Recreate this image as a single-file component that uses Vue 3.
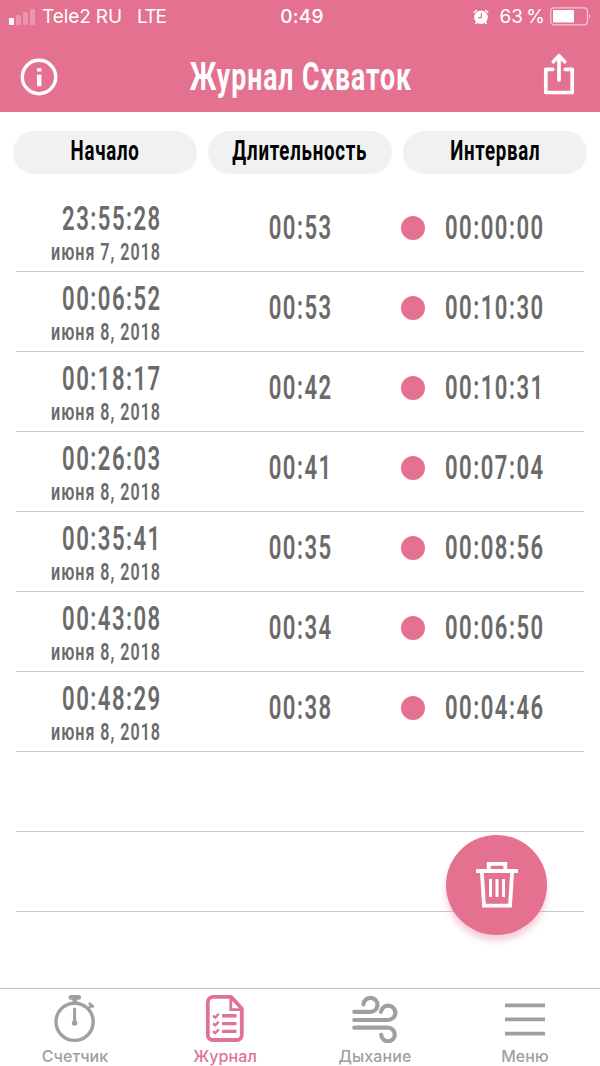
<template>
  <div class="screen">
    <header class="header">
      <div class="status">
        <div class="status-left">
          <div class="signal">
            <i v-for="n in 4" :key="n" :class="['bar', 'bar-' + n]"></i>
          </div>
          <span class="carrier">Tele2 RU</span>
          <span class="network">LTE</span>
        </div>
        <span class="clock">0:49</span>
        <div class="status-right">
          <svg class="alarm" width="16" height="16" viewBox="0 0 16 16">
            <circle cx="8" cy="8.2" r="6.8" fill="#fff" />
            <path d="M.8 3.8 3.8 1M12.2 1l3 2.8M3.8 13 2.4 15M12.2 13l1.4 2" stroke="#fff" stroke-width="1.5" />
            <path d="M8.4 4.3v4.4H5" fill="none" stroke="#e57191" stroke-width="1.2" />
          </svg>
          <span class="percent">63 %</span>
          <svg class="battery" width="42" height="19" viewBox="0 0 42 19">
            <rect x=".8" y=".8" width="36.6" height="17" rx="3" fill="none" stroke="#fff" stroke-opacity=".6" stroke-width="1.2" />
            <rect x="3" y="3" width="21" height="12.6" rx="1" fill="#fff" />
            <path d="M39 6.5q2.6 2.8 0 5.6z" fill="#fff" fill-opacity=".6" />
          </svg>
        </div>
      </div>
      <div class="nav">
        <svg width="38" height="38" viewBox="0 0 38 38">
          <circle cx="19" cy="19" r="16.7" fill="none" stroke="#fff" stroke-width="3.4" />
          <path d="M17 10.2h4.4v3.4H17zM17 16.8h4.4v11.4H17z" fill="#fff" />
        </svg>
        <h1 class="title"><span>Журнал Схваток</span></h1>
        <svg class="share" width="32" height="42" viewBox="0 0 32 42" fill="none" stroke="#fff" stroke-width="3.7">
          <path d="M9.8 16.3H2.8v23.2h26.4V16.3h-7" stroke-linejoin="round" stroke-linecap="round" />
          <path d="M16 27V3M10.3 8.7 16 2.7l5.7 6" stroke-linecap="round" stroke-linejoin="round" />
        </svg>
      </div>
    </header>

    <main class="content">
      <div class="columns">
        <div v-for="name in columns" :key="name" class="pill"><span>{{ name }}</span></div>
      </div>
      <ul class="list">
        <li v-for="(row, i) in rows" :key="i" class="row">
          <div class="start">
            <span class="time">{{ row.start }}</span>
            <span class="date">{{ row.date }}</span>
          </div>
          <div class="duration"><span class="time">{{ row.duration }}</span></div>
          <div class="interval">
            <i class="dot"></i>
            <span class="time">{{ row.interval }}</span>
          </div>
        </li>
        <li class="row"></li>
        <li class="row"></li>
      </ul>
      <button class="trash">
        <svg width="42" height="46" viewBox="0 0 42 46" fill="none" stroke="#fff">
          <path d="M0 9h42" stroke-width="3.8" />
          <path d="M12.7 9V1.9h16.6V9" stroke-width="3.8" />
          <path d="M5.8 9 8 43.6h26L36.2 9" stroke-width="3.8" />
          <path d="M14.5 17v18M21 17v18M27.5 17v18" stroke-width="3" />
        </svg>
      </button>
    </main>

    <nav class="tabs">
      <div class="tab">
        <svg width="50" height="50" viewBox="0 0 50 50" fill="none" stroke="currentColor">
          <circle cx="24.6" cy="28.8" r="18.6" stroke-width="3.4" />
          <path d="M20.8 4.4h8" stroke-width="4.6" stroke-linecap="round" />
          <path d="M24.8 4v7" stroke-width="4.6" />
          <path d="M38 16l3.8-3.8M39 10l4.6 4.2" stroke-width="2.6" />
          <path d="M24.6 16v14" stroke-width="3" stroke-linecap="round" />
          <circle cx="24.6" cy="30" r="2.8" fill="currentColor" stroke="none" />
        </svg>
        <span>Счетчик</span>
      </div>
      <div class="tab active">
        <svg width="50" height="50" viewBox="0 0 50 50" fill="none" stroke="currentColor">
          <path d="M31 3.8H13.2a5.4 5.4 0 0 0-5.4 5.4V42a5 5 0 0 0 5 5h24a5 5 0 0 0 5-5V15.5z" stroke-width="3.8" stroke-linejoin="round" />
          <path d="M30.8 4v12.6h11.2" stroke-width="2.8" />
          <path d="M22 22.8h14.5M22 30.6h14.5M22 38.4h14.5" stroke-width="3.4" />
          <path d="M13 22.6l2.3 2 3.5-3.8M13 30.4l2.3 2 3.5-3.8M13 38.2l2.3 2 3.5-3.8" stroke-width="2.4" />
        </svg>
        <span>Журнал</span>
      </div>
      <div class="tab">
        <svg width="50" height="50" viewBox="0 0 50 50" fill="none" stroke="currentColor" stroke-width="4.2" stroke-linecap="round">
          <path d="M4.3 18.8H20.3a7 7 0 1 0-6.8-7.4" />
          <path d="M4.3 27H38a7.2 7.2 0 1 0-7-8.2" />
          <path d="M4.3 34.7H38a6.8 6.8 0 1 1-6.8 7.2" />
        </svg>
        <span>Дыхание</span>
      </div>
      <div class="tab">
        <svg width="50" height="50" viewBox="0 0 50 50" stroke="currentColor" stroke-width="3.8">
          <path d="M5 12.3h40M5 26.4h40M5 40.6h40" />
        </svg>
        <span>Меню</span>
      </div>
    </nav>
  </div>
</template>

<script setup>
const columns = ['Начало', 'Длительность', 'Интервал']

const rows = [
  { start: '23:55:28', date: 'июня 7, 2018', duration: '00:53', interval: '00:00:00' },
  { start: '00:06:52', date: 'июня 8, 2018', duration: '00:53', interval: '00:10:30' },
  { start: '00:18:17', date: 'июня 8, 2018', duration: '00:42', interval: '00:10:31' },
  { start: '00:26:03', date: 'июня 8, 2018', duration: '00:41', interval: '00:07:04' },
  { start: '00:35:41', date: 'июня 8, 2018', duration: '00:35', interval: '00:08:56' },
  { start: '00:43:08', date: 'июня 8, 2018', duration: '00:34', interval: '00:06:50' },
  { start: '00:48:29', date: 'июня 8, 2018', duration: '00:38', interval: '00:04:46' },
]
</script>

<style>
body {
  margin: 0;
  background: #fff;
}
</style>

<style scoped>
.screen {
  width: 600px;
  height: 1066px;
  display: flex;
  flex-direction: column;
  overflow: hidden;
  background: #fff;
  font-family: Roboto, 'Liberation Sans', sans-serif;
}

svg {
  display: block;
  flex: none;
}

.header {
  height: 112px;
  background: #e57191;
  color: #fff;
}

.status {
  height: 33px;
  display: grid;
  grid-template-columns: 1fr auto 1fr;
  align-items: center;
  font: 400 19px/33px Inter, sans-serif;
}

.status-left,
.status-right {
  display: flex;
  align-items: center;
}

.status-left {
  padding-left: 9px;
}

.status-right {
  justify-content: flex-end;
  padding-right: 8px;
}

.signal {
  display: flex;
  align-items: flex-end;
  gap: 2px;
  width: 27px;
  height: 16px;
  margin-right: 6px;
}

.bar {
  width: 5px;
  border-radius: 1px;
  background: rgba(255, 255, 255, 0.25);
}

.bar-1 {
  height: 7px;
  background: #fff;
}

.bar-2 { height: 10px; }
.bar-3 { height: 13px; }
.bar-4 { height: 16px; }

.carrier {
  letter-spacing: -0.1px;
}

.network {
  margin-left: 15px;
  letter-spacing: -1.4px;
}

.clock {
  margin-left: 4px;
  font-weight: 500;
  letter-spacing: 0.2px;
}

.percent {
  margin: 0 5px 0 10px;
  word-spacing: -2px;
}

.nav {
  height: 79px;
  display: flex;
  align-items: center;
  justify-content: space-between;
  padding: 0 25px 0 20px;
  box-sizing: border-box;
}

.nav > svg {
  margin-top: 9px;
}

.nav > .share {
  margin-top: 2px;
}

/* the wide face is squeezed to get a narrow DIN look */
.title {
  width: 320px;
  margin: 8px 0 0;
  font-size: 38px;
  line-height: 48px;
  font-weight: 700;
  text-align: center;
  white-space: nowrap;
}

.title span {
  display: inline-block;
  letter-spacing: 1.4px;
  transform: scaleX(0.7);
}

.content {
  position: relative;
  flex: 1;
}

.columns {
  display: grid;
  grid-template-columns: repeat(3, 184px);
  gap: 11px;
  padding: 19px 13px 0;
}

.pill {
  height: 43px;
  border-radius: 22px;
  background: #f1f1f1;
  color: #000;
  font-size: 27px;
  line-height: 41px;
  font-weight: 700;
  text-align: center;
  white-space: nowrap;
  display: flex;
  justify-content: center;
}

.pill span {
  letter-spacing: 1.1px;
  transform: scaleX(0.69);
}

.list {
  margin: 18px 16px 0;
  padding: 0;
  list-style: none;
}

.row {
  height: 80px;
  box-sizing: border-box;
  border-bottom: 1px solid #c9c9c9;
  display: grid;
  grid-template-columns: 184px 200px 184px;
  color: #6a6a6a;
}

.time {
  display: block;
  font-size: 33px;
  line-height: 36px;
  font-weight: 600;
  letter-spacing: 2.2px;
  margin-right: -2.2px;
  white-space: nowrap;
  transform: scaleX(0.67);
}

.start {
  display: flex;
  flex-direction: column;
  align-items: flex-end;
  padding: 9px 40px 0 0;
}

.start .time {
  transform-origin: right;
}

.date {
  font-size: 23px;
  line-height: 26px;
  font-weight: 600;
  letter-spacing: 1.4px;
  margin: 3px -1.4px 0 0;
  white-space: nowrap;
  transform: scaleX(0.7);
  transform-origin: right;
}

.duration {
  display: flex;
  justify-content: center;
  padding-top: 18px;
}

.interval {
  display: flex;
  align-items: flex-start;
  padding-top: 18px;
}

.interval .time {
  transform-origin: left;
}

.dot {
  flex: none;
  width: 24px;
  height: 24px;
  margin: 6px 20px 0 1px;
  border-radius: 50%;
  background: #e57191;
}

.trash {
  position: absolute;
  right: 53px;
  bottom: 53px;
  width: 101px;
  height: 100px;
  padding: 0;
  border: 0;
  border-radius: 50%;
  background: #e57191;
  box-shadow: 0 6px 6px rgba(229, 113, 145, 0.35);
  display: flex;
  align-items: center;
  justify-content: center;
}

.tabs {
  height: 78px;
  box-sizing: border-box;
  border-top: 1px solid #c4c4c4;
  display: grid;
  grid-template-columns: repeat(4, 150px);
  background: #fff;
}

.tab {
  display: flex;
  flex-direction: column;
  align-items: center;
  padding-top: 4px;
  color: #a0a0a0;
  font: 500 16px/20px Inter, sans-serif;
  letter-spacing: 0.1px;
}

.tab span {
  margin-top: 3px;
}

.active {
  color: #df7392;
}
</style>
